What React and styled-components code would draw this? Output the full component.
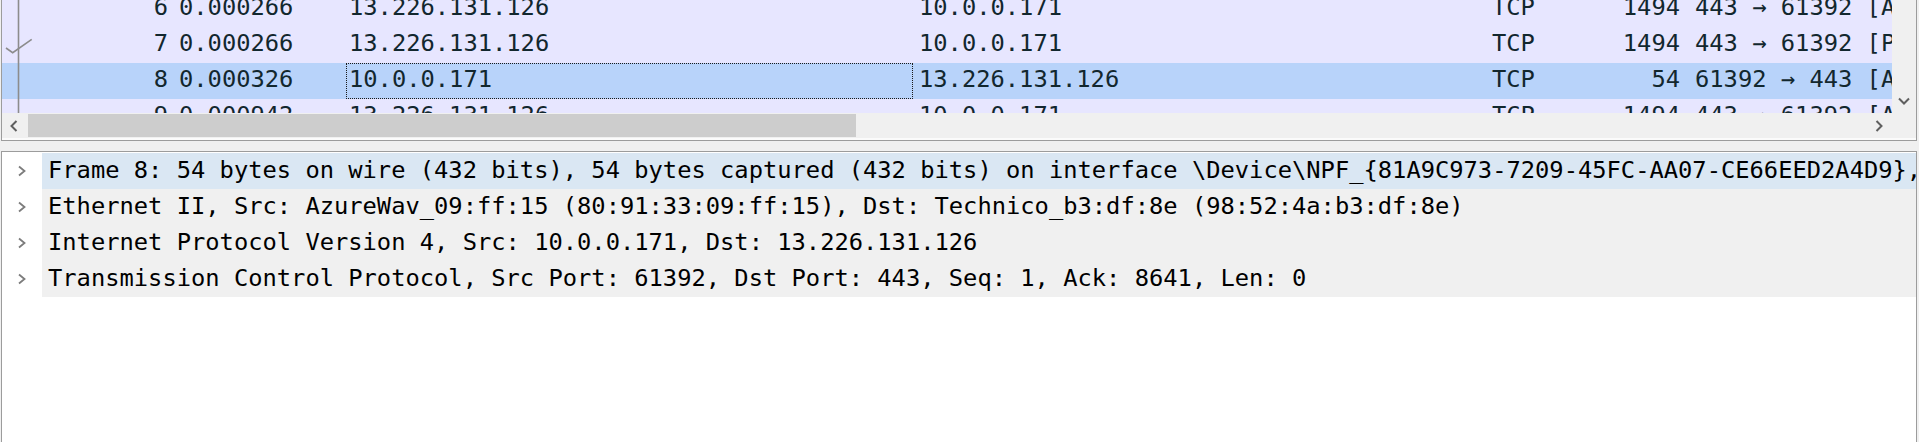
import React from "react";
import styled, { createGlobalStyle } from "styled-components";

const GlobalStyle = createGlobalStyle`
  html, body {
    margin: 0;
    padding: 0;
    background: #f0f0f0;
    overflow: hidden;
  }
  body {
    font-family: "DejaVu Sans Mono", "Liberation Mono", monospace;
  }
`;

const Window = styled.div`
  width: 1919px;
  height: 442px;
  box-sizing: border-box;
  padding: 0 2px 0 1px;
  display: flex;
  flex-direction: column;
  overflow: hidden;
`;

const PacketPane = styled.div`
  height: 141px;
  flex: none;
  box-sizing: border-box;
  border: 1px solid #9c9c9c;
  border-top: none;
  padding-bottom: 2px;
  background: #fbfbfb;
  display: grid;
  grid-template-columns: 1fr 24px;
  grid-template-rows: 113px 25px;
`;

const Viewport = styled.div`
  overflow: hidden;
  background: #ffffff;
`;

const RowList = styled.div`
  margin-top: -9px;
  width: 2400px;
`;

const PacketRow = styled.div`
  display: flex;
  height: 36px;
  background: ${(p) => (p.$selected ? "#b8d3fa" : "#e7e6ff")};
  color: #12272e;
  font-size: 23.75px;
`;

const Cell = styled.div`
  flex: none;
  width: ${(p) => p.$w}px;
  height: 36px;
  box-sizing: border-box;
  padding: 0 ${(p) => p.$pr || 0}px 4px ${(p) => p.$pl || 0}px;
  line-height: 32px;
  white-space: pre;
  overflow: hidden;
  text-align: ${(p) => p.$align || "left"};
  outline: ${(p) => (p.$focus ? "1px dotted #1a1a1a" : "none")};
  outline-offset: -1px;
`;

const NumberCell = styled(Cell)`
  display: flex;
  align-items: flex-start;
  padding-bottom: 0;
  svg {
    flex: none;
    display: block;
  }
  span {
    margin-left: auto;
  }
`;

const InfoCell = styled(Cell)`
  flex: 1;
  width: auto;
`;

const VScroll = styled.div`
  background: #f0f0f0;
  display: flex;
  flex-direction: column;
  justify-content: flex-end;
`;

const HScroll = styled.div`
  background: #f0f0f0;
  display: flex;
  align-items: stretch;
`;

const Corner = styled.div`
  background: #f0f0f0;
`;

const ArrowButton = styled.div`
  flex: none;
  width: ${(p) => p.$w || 26}px;
  height: ${(p) => p.$h || 25}px;
  display: flex;
  align-items: center;
  justify-content: center;
  svg {
    display: block;
  }
`;

const Thumb = styled.div`
  flex: none;
  width: ${(p) => p.$w}px;
  margin: 1px 0;
  background: #cdcdcd;
`;

const Track = styled.div`
  flex: 1;
`;

const Splitter = styled.div`
  height: 10px;
  flex: none;
`;

const DetailsPane = styled.div`
  flex: 1;
  border: 1px solid #9c9c9c;
  border-bottom: none;
  background: #ffffff;
  padding-top: 1px;
  overflow: hidden;
`;

const DetailRow = styled.div`
  display: flex;
  height: 36px;
`;

const Branch = styled.div`
  flex: none;
  width: 40px;
  box-sizing: border-box;
  padding-left: 15px;
  display: flex;
  align-items: center;
  svg {
    display: block;
  }
`;

const Label = styled.div`
  flex: 1;
  min-width: 0;
  box-sizing: border-box;
  padding: 0 0 2px 6px;
  line-height: 34px;
  font-size: 23.75px;
  color: #000000;
  white-space: pre;
  overflow: hidden;
  background: ${(p) => (p.$current ? "#dae7f3" : "#f0f0f0")};
`;

const packets = [
  {
    no: 6,
    time: "0.000266",
    src: "13.226.131.126",
    dst: "10.0.0.171",
    proto: "TCP",
    len: 1494,
    info: "443 → 61392 [ACK] Seq=5761 Ack=1 Win=16385 Len=1440 [TCP segment of a reassembled PDU]",
  },
  {
    no: 7,
    time: "0.000266",
    src: "13.226.131.126",
    dst: "10.0.0.171",
    proto: "TCP",
    len: 1494,
    info: "443 → 61392 [PSH, ACK] Seq=7201 Ack=1 Win=16385 Len=1440 [TCP segment of a reassembled PDU]",
    mark: "ack",
  },
  {
    no: 8,
    time: "0.000326",
    src: "10.0.0.171",
    dst: "13.226.131.126",
    proto: "TCP",
    len: 54,
    info: "61392 → 443 [ACK] Seq=1 Ack=8641 Win=131840 Len=0",
    selected: true,
  },
  {
    no: 9,
    time: "0.000942",
    src: "13.226.131.126",
    dst: "10.0.0.171",
    proto: "TCP",
    len: 1494,
    info: "443 → 61392 [ACK] Seq=8641 Ack=1 Win=16385 Len=1440 [TCP segment of a reassembled PDU]",
  },
];

const details = [
  "Frame 8: 54 bytes on wire (432 bits), 54 bytes captured (432 bits) on interface \\Device\\NPF_{81A9C973-7209-45FC-AA07-CE66EED2A4D9}, id 0",
  "Ethernet II, Src: AzureWav_09:ff:15 (80:91:33:09:ff:15), Dst: Technico_b3:df:8e (98:52:4a:b3:df:8e)",
  "Internet Protocol Version 4, Src: 10.0.0.171, Dst: 13.226.131.126",
  "Transmission Control Protocol, Src Port: 61392, Dst Port: 443, Seq: 1, Ack: 8641, Len: 0",
];

// conversation line + ack tick drawn in the No. column
const RelatedMark = ({ kind }) => (
  <svg width="40" height="36" viewBox="0 0 40 36">
    <line x1="16.5" y1="0" x2="16.5" y2="36" stroke="#8c8c8c" strokeWidth="1.6" />
    {kind === "ack" && (
      <polyline
        points="4,21 10.7,25.7 29.7,12.3"
        fill="none"
        stroke="#8c8c8c"
        strokeWidth="1.6"
      />
    )}
  </svg>
);

const Chevron = ({ dir, size = 12 }) => {
  const pts = {
    left: "7.5,1 2.5,6 7.5,11",
    right: "3.5,1 8.5,6 3.5,11",
    down: "1,3.5 6,8.5 11,3.5",
  }[dir];
  return (
    <svg width={size} height={size} viewBox="0 0 12 12">
      <polyline points={pts} fill="none" stroke="#5f5f5f" strokeWidth="2" />
    </svg>
  );
};

const Expander = () => (
  <svg width="10" height="12" viewBox="0 0 10 12">
    <polyline points="2,1.5 7.5,6 2,10.5" fill="none" stroke="#7c7c7c" strokeWidth="1.8" />
  </svg>
);

export default function App() {
  return (
    <>
      <GlobalStyle />
      <Window>
        <PacketPane>
          <Viewport>
            <RowList>
              {packets.map((p) => (
                <PacketRow key={p.no} $selected={p.selected}>
                  <NumberCell $w={174} $pr={8}>
                    <RelatedMark kind={p.mark} />
                    <span>{p.no}</span>
                  </NumberCell>
                  <Cell $w={170} $pl={3}>{p.time}</Cell>
                  <Cell $w={567} $pl={3} $focus={p.selected}>
                    {p.src}
                  </Cell>
                  <Cell $w={576} $pl={6}>{p.dst}</Cell>
                  <Cell $w={111} $pl={3}>{p.proto}</Cell>
                  <Cell $w={88} $pr={8} $align="right">
                    {p.len}
                  </Cell>
                  <InfoCell $pl={7}>{p.info}</InfoCell>
                </PacketRow>
              ))}
            </RowList>
          </Viewport>
          <VScroll>
            <ArrowButton $w={24} $h={25}>
              <Chevron dir="down" />
            </ArrowButton>
          </VScroll>
          <HScroll>
            <ArrowButton>
              <Chevron dir="left" />
            </ArrowButton>
            <Thumb $w={828} />
            <Track />
            <ArrowButton>
              <Chevron dir="right" />
            </ArrowButton>
          </HScroll>
          <Corner />
        </PacketPane>
        <Splitter />
        <DetailsPane>
          {details.map((text, i) => (
            <DetailRow key={i}>
              <Branch>
                <Expander />
              </Branch>
              <Label $current={i === 0}>{text}</Label>
            </DetailRow>
          ))}
        </DetailsPane>
      </Window>
    </>
  );
}
